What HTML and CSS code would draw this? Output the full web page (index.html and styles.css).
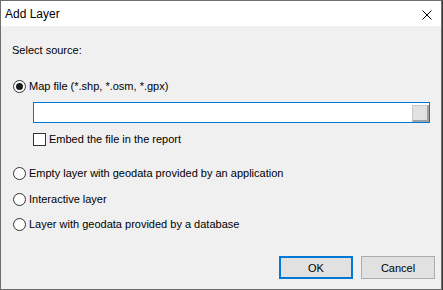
FILE: index.html
```html
<!DOCTYPE html>
<html lang="en">
<head>
  <meta charset="UTF-8">
  <title>Add Layer</title>
  <link rel="stylesheet" href="styles.css">
</head>
<body>
  <div class="dialog">
    <div class="titlebar">
      <span class="title">Add Layer</span>
      <svg class="close" width="10" height="10" viewBox="0 0 10 10">
        <path d="M0.5 0.5 L9.5 9.5 M9.5 0.5 L0.5 9.5" stroke="#000" stroke-width="1" fill="none"/>
      </svg>
    </div>

    <div class="content">
      <div class="label">Select source:</div>

      <label class="radio first">
        <span class="circle checked"></span>Map file (*.shp, *.osm, *.gpx)
      </label>
      <div class="filebox"><span class="browse"></span></div>
      <label class="check">
        <span class="box"></span>Embed the file in the report
      </label>

      <label class="radio second">
        <span class="circle"></span>Empty layer with geodata provided by an application
      </label>
      <label class="radio third">
        <span class="circle"></span>Interactive layer
      </label>
      <label class="radio fourth">
        <span class="circle"></span>Layer with geodata provided by a database
      </label>

      <div class="buttons">
        <button class="btn default">OK</button>
        <button class="btn">Cancel</button>
      </div>
    </div>
  </div>
</body>
</html>
```

FILE: styles.css
```css
html, body {
  margin: 0;
  background-color: #3a3a3a;
}
body {
  font-family: "Liberation Sans", Arial, sans-serif;
  font-size: 11px;
  line-height: 13px;
  color: #000;
}
.dialog {
  width: 440px;
  height: 288px;
  border: 1px solid #6e6e6e;
  background-color: #f0f0f0;
  display: flex;
  flex-direction: column;
}
.titlebar {
  height: 25px;
  background-color: #fff;
  display: flex;
  align-items: center;
  justify-content: space-between;
  padding-left: 4px;
}
.title {
  font-size: 12px;
  line-height: 15px;
  margin-top: 1px;
}
.close {
  margin-right: 9px;
  margin-top: 2px;
}
.content {
  flex: 1;
  display: flex;
  flex-direction: column;
  align-items: flex-start;
  padding: 18px 6px 10px 11px;
}
.radio, .check {
  display: flex;
  align-items: center;
  height: 13px;
  gap: 3px;
  white-space: nowrap;
}
.radio {
  margin-left: 1px;
}
.first { margin-top: 23px; }
.second { margin-top: 21px; }
.third { margin-top: 13px; }
.fourth { margin-top: 12px; }
.circle {
  width: 11px;
  height: 11px;
  border: 1px solid #333;
  border-radius: 50%;
  background-color: #fff;
  position: relative;
}
.circle.checked::after {
  content: "";
  position: absolute;
  left: 2px;
  top: 2px;
  width: 7px;
  height: 7px;
  border-radius: 50%;
  background-color: #1a1a1a;
}
.filebox {
  margin: 9px 0 0 21px;
  width: 395px;
  height: 19px;
  border: 1px solid #0078d7;
  background-color: #fff;
  display: flex;
  justify-content: flex-end;
  align-items: flex-start;
}
.browse {
  margin-top: 2px;
  width: 14px;
  height: 14px;
  background-color: #e1e1e1;
  border-top: 1px solid #c8c8c8;
  border-left: 1px solid #c8c8c8;
  border-right: 2px solid #a0a0a0;
  border-bottom: 2px solid #a0a0a0;
}
.check {
  margin: 10px 0 0 21px;
}
.box {
  width: 11px;
  height: 11px;
  border: 1px solid #333;
  background-color: #fff;
}
.buttons {
  margin-top: auto;
  align-self: stretch;
  display: flex;
  justify-content: flex-end;
  gap: 8px;
}
.btn {
  width: 74px;
  height: 23px;
  font-family: "Liberation Sans", Arial, sans-serif;
  font-size: 11px;
  color: #000;
  background-color: #e1e1e1;
  border: 1px solid #adadad;
  padding: 0;
}
.btn.default {
  border: 2px solid #0078d7;
}
```
